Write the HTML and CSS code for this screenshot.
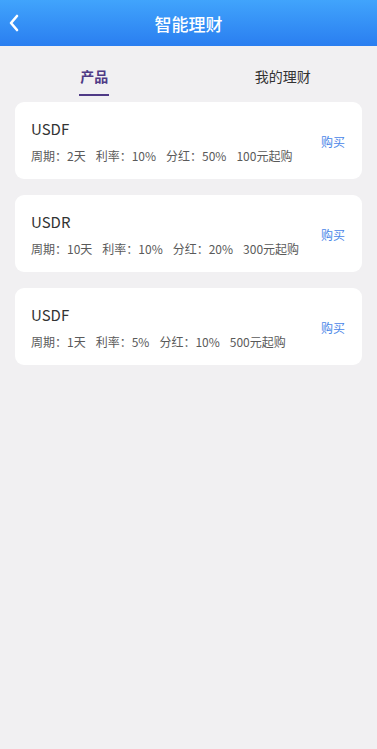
FILE: index.html
```html
<!DOCTYPE html>
<html lang="zh-CN">
<head>
  <meta charset="UTF-8">
  <meta name="viewport" content="width=device-width, initial-scale=1.0">
  <title>智能理财</title>
  <link rel="stylesheet" href="styles.css">
</head>
<body>
  <header class="topbar">
    <a class="back" href="#">
      <svg width="12" height="18" viewBox="0 0 12 18"><path d="M9 2 L3 9 L9 16" fill="none" stroke="#fff" stroke-width="2.6" stroke-linecap="round" stroke-linejoin="round"/></svg>
    </a>
    <h1>智能理财</h1>
  </header>

  <nav class="tabs">
    <div class="tab active"><span>产品</span></div>
    <div class="tab"><span>我的理财</span></div>
  </nav>

  <div class="list">
    <div class="card">
      <div class="info">
        <div class="name">USDF</div>
        <div class="meta">
          <span>周期：2天</span><span>利率：10%</span><span>分红：50%</span><span>100元起购</span>
        </div>
      </div>
      <a class="buy" href="#">购买</a>
    </div>
    <div class="card">
      <div class="info">
        <div class="name">USDR</div>
        <div class="meta">
          <span>周期：10天</span><span>利率：10%</span><span>分红：20%</span><span>300元起购</span>
        </div>
      </div>
      <a class="buy" href="#">购买</a>
    </div>
    <div class="card">
      <div class="info">
        <div class="name">USDF</div>
        <div class="meta">
          <span>周期：1天</span><span>利率：5%</span><span>分红：10%</span><span>500元起购</span>
        </div>
      </div>
      <a class="buy" href="#">购买</a>
    </div>
  </div>
</body>
</html>
```

FILE: styles.css
```css
body {
  margin: 0;
  background: #f1f0f2;
  font-family: "Noto Sans CJK SC", "Noto Sans", sans-serif;
  color: #333;
}
.topbar {
  position: relative;
  height: 46px;
  background: linear-gradient(180deg, #41a4fc 0%, #2a7ef0 100%);
  display: flex;
  align-items: center;
  justify-content: center;
}
.topbar h1 {
  margin: 0;
  font-size: 17px;
  font-weight: 500;
  color: #fff;
}
.back {
  position: absolute;
  left: 8px;
  top: 13px;
  display: block;
}
.tabs {
  display: flex;
  padding-top: 20px;
}
.tab {
  flex: 1;
  display: flex;
  justify-content: center;
}
.tab span {
  font-size: 14px;
  line-height: 20px;
  padding-bottom: 10px;
  color: #333;
}
.tab.active span {
  color: #4f3a86;
  font-weight: 700;
  border-bottom: 2px solid #4f3a86;
  padding-bottom: 8px;
  padding-left: 1px;
  padding-right: 1px;
}
.list {
  padding: 6px 15px;
  display: flex;
  flex-direction: column;
  gap: 16px;
}
.card {
  background: #fff;
  border-radius: 9px;
  padding: 16px 16px 14px;
  display: flex;
  align-items: center;
}
.info {
  flex: 1;
}
.name {
  font-size: 15px;
  line-height: 22px;
  color: #333;
}
.meta {
  margin-top: 7px;
  font-size: 12px;
  line-height: 18px;
  color: #5a5a5a;
  display: flex;
  gap: 10px;
}
.buy {
  font-size: 12px;
  color: #4a86e8;
  text-decoration: none;
  margin-right: 1px;
}
```
